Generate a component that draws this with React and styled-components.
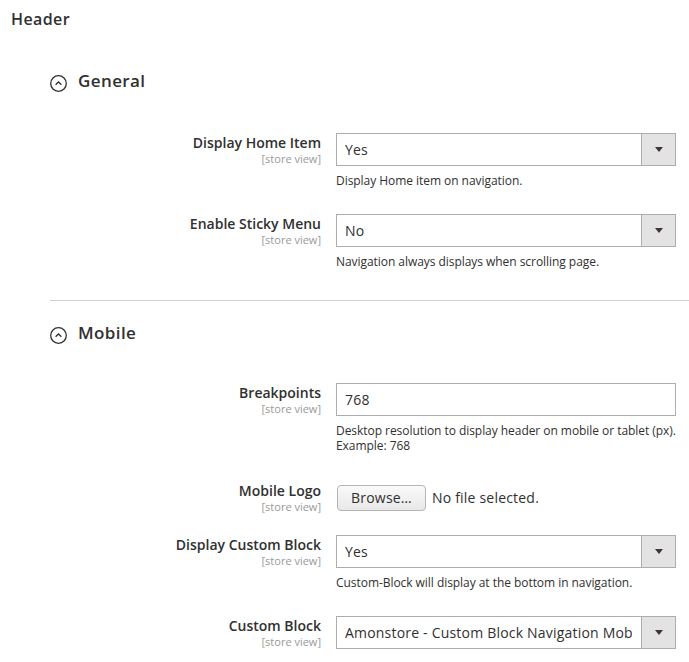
import React from "react";
import styled, { createGlobalStyle } from "styled-components";

const GlobalStyle = createGlobalStyle`
  html, body { margin: 0; padding: 0; background: #fff; }
  body {
    font-family: "Open Sans", "Noto Sans", sans-serif;
    color: #303030;
  }
  * { box-sizing: border-box; }
`;

const Page = styled.div`
  width: 689px;
  padding-bottom: 12px;
`;

const PageTitle = styled.h2`
  margin: 0;
  padding: 9px 0 0 11px;
  font-size: 16px;
  font-weight: 600;
  line-height: 20px;
  letter-spacing: 0.4px;
  color: #303030;
`;

const Section = styled.section`
  padding-left: 50px;
  margin-top: ${(p) => p.$mt}px;
`;

const SectionHead = styled.div`
  display: flex;
  align-items: flex-start;
  gap: 11px;
  height: 24px;
  margin-bottom: ${(p) => p.$mb}px;
`;

const SectionIcon = styled.svg`
  width: 17px;
  height: 17px;
  margin-top: 6px;
  flex: none;
`;

const SectionTitle = styled.span`
  font-size: 17px;
  font-weight: 600;
  line-height: 24px;
  letter-spacing: 0.4px;
  color: #303030;
`;

const Row = styled.div`
  display: grid;
  grid-template-columns: 271px 340px;
  column-gap: 15px;
  margin-bottom: ${(p) => p.$mb || 0}px;
`;

const LabelCell = styled.div`
  text-align: right;
  padding-top: 1px;
`;

const Label = styled.div`
  font-size: 14px;
  font-weight: 600;
  line-height: 18px;
  color: #303030;
`;

const Scope = styled.div`
  font-size: 11px;
  line-height: 13px;
  color: #999;
`;

const ControlCell = styled.div`
  display: flex;
  flex-direction: column;
`;

const Box = styled.div`
  position: relative;
  height: 33px;
  border: 1px solid #adadad;
  background: #fff;
  padding: 6px 0 6px 8px;
  font-size: 14px;
  line-height: 19px;
  letter-spacing: 0.2px;
  color: #303030;
  white-space: nowrap;
`;

const Value = styled.span`
  display: block;
  width: 287px;
  overflow: hidden;
  white-space: nowrap;
`;

const Arrow = styled.span`
  position: absolute;
  top: 0;
  right: 0;
  bottom: 0;
  width: 34px;
  background: #e3e3e3;
  border-left: 1px solid #adadad;
  display: flex;
  align-items: center;
  justify-content: center;
  &::after {
    content: "";
    border-left: 4px solid transparent;
    border-right: 4px solid transparent;
    border-top: 5px solid #41362f;
  }
`;

const Note = styled.div`
  margin-top: 7px;
  font-size: 12px;
  line-height: 15px;
  letter-spacing: -0.05px;
  color: #303030;
  white-space: nowrap;
`;

const FileLine = styled.div`
  height: 33px;
  display: flex;
  align-items: center;
  gap: 6px;
  padding-left: 1px;
  font-size: 14px;
  letter-spacing: 0.2px;
`;

const BrowseButton = styled.button`
  height: 26px;
  width: 89px;
  padding: 0;
  border: 1px solid #b5b5b5;
  border-radius: 4px;
  background: linear-gradient(#fafafa, #e8e8e8);
  font-family: "Open Sans", "Noto Sans", sans-serif;
  font-size: 14px;
  letter-spacing: 0.2px;
  color: #303030;
`;

const Separator = styled.hr`
  margin: ${(p) => p.$mt}px 0 0 50px;
  border: 0;
  border-top: 1px solid #d1d1d1;
  height: 0;
`;

const CollapseIcon = () => (
  <SectionIcon viewBox="0 0 17 17">
    <circle cx="8.5" cy="8.5" r="7.8" fill="none" stroke="#303030" strokeWidth="1.3" />
    <path d="M5.6 9.8 L8.5 7 L11.4 9.8" fill="none" stroke="#303030" strokeWidth="1.3" />
  </SectionIcon>
);

const Field = ({ label, children, mb }) => (
  <Row $mb={mb}>
    <LabelCell>
      <Label>{label}</Label>
      <Scope>[store view]</Scope>
    </LabelCell>
    <ControlCell>{children}</ControlCell>
  </Row>
);

const Select = ({ value }) => (
  <Box>
    <Value>{value}</Value>
    <Arrow />
  </Box>
);

export default function App() {
  return (
    <Page>
      <GlobalStyle />
      <PageTitle>Header</PageTitle>

      <Section $mt={40}>
        <SectionHead $mb={40}>
          <CollapseIcon />
          <SectionTitle>General</SectionTitle>
        </SectionHead>
        <Field label="Display Home Item" mb={26}>
          <Select value="Yes" />
          <Note>Display Home item on navigation.</Note>
        </Field>
        <Field label="Enable Sticky Menu">
          <Select value="No" />
          <Note>Navigation always displays when scrolling page.</Note>
        </Field>
      </Section>

      <Separator $mt={31} />

      <Section $mt={20}>
        <SectionHead $mb={38}>
          <CollapseIcon />
          <SectionTitle>Mobile</SectionTitle>
        </SectionHead>
        <Field label="Breakpoints" mb={28}>
          <Box>768</Box>
          <Note>
            Desktop resolution to display header on mobile or tablet (px).
            <br />
            Example: 768
          </Note>
        </Field>
        <Field label="Mobile Logo" mb={21}>
          <FileLine>
            <BrowseButton type="button">Browse…</BrowseButton>
            <span>No file selected.</span>
          </FileLine>
        </Field>
        <Field label="Display Custom Block" mb={26}>
          <Select value="Yes" />
          <Note>Custom-Block will display at the bottom in navigation.</Note>
        </Field>
        <Field label="Custom Block">
          <Select value="Amonstore - Custom Block Navigation Mobile" />
        </Field>
      </Section>
    </Page>
  );
}
